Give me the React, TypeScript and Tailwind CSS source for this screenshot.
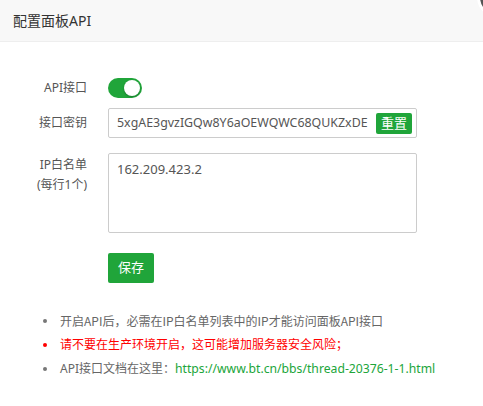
import React from 'react';

const font = { fontFamily: '"Noto Sans", "Noto Sans CJK SC", sans-serif' };
const cjk = { fontFamily: '"Noto Sans CJK SC", sans-serif' };

const FormRow = ({ label, children, align = 'items-center' }: { label: React.ReactNode; children: React.ReactNode; align?: string }) => (
  <div className={`flex ${align}`}>
    <div className="w-[87px] shrink-0 text-right text-[12px] leading-[20px] text-[#555]">{label}</div>
    <div className="ml-[21px]">{children}</div>
  </div>
);

const App = () => {
  return (
    <div className="relative w-full h-[406px] overflow-hidden bg-white" style={font}>
      <div className="h-[42px] bg-[#f8f8f8] border-b border-[#eee] flex items-center pl-[13px] text-[14px] text-[#333]">
        配置面板API
      </div>
      {/* layer close button, mostly off-screen */}
      <div className="absolute left-[477px] top-[-24px] w-[42px] h-[42px] rounded-full bg-[#555] border-[3px] border-white" />

      <div className="pt-[36px]">
        <FormRow label="API接口">
          <div className="w-[34px] h-[20px] rounded-full bg-[#20a53a] flex items-center justify-end pr-[2px]">
            <div className="w-[16px] h-[16px] rounded-full bg-white shadow-[0_1px_2px_rgba(0,0,0,0.25)]" />
          </div>
        </FormRow>

        <div className="mt-[10px]">
          <FormRow label="接口密钥">
            <div className="w-[309px] h-[30px] border border-[#ccc] rounded-[2px] flex items-center justify-between pl-[8px] pr-[4px]">
              <span className="text-[12.4px] text-[#555] whitespace-nowrap overflow-hidden">5xgAE3gvzIGQw8Y6aOEWQWC68QUKZxDE</span>
              <button className="shrink-0 whitespace-nowrap h-[21px] w-[36px] rounded-[2px] bg-[#20a53a] text-white text-[13px] leading-[21px]">重置</button>
            </div>
          </FormRow>
        </div>

        <div className="mt-[15px]">
          <FormRow label={<div className="pt-[2px]">IP白名单<br />(每行1个)</div>} align="items-start">
            <textarea
              className="block w-[309px] h-[80px] border border-[#ccc] rounded-[2px] px-[8px] py-[6px] text-[13px] text-[#555] resize-none outline-none"
              defaultValue="162.209.423.2"
            />
          </FormRow>
        </div>

        <div className="mt-[20px] pl-[108px]">
          <button className="w-[46px] h-[30px] rounded-[2px] bg-[#20a53a] text-white text-[13px]">保存</button>
        </div>

        <ul className="mt-[26px] text-[12px] leading-[24px]">
          <li className="flex items-center text-[#666]">
            <span className="ml-[43px] w-[4px] h-[4px] rounded-full bg-[#777]" />
            <span className="ml-[13px] whitespace-nowrap" style={cjk}>开启API后，必需在IP白名单列表中的IP才能访问面板API接口</span>
          </li>
          <li className="flex items-center text-[#f00]">
            <span className="ml-[43px] w-[4px] h-[4px] rounded-full bg-[#f00]" />
            <span className="ml-[13px] whitespace-nowrap">请不要在生产环境开启，这可能增加服务器安全风险；</span>
          </li>
          <li className="flex items-center text-[#666]">
            <span className="ml-[43px] w-[4px] h-[4px] rounded-full bg-[#777]" />
            <span className="ml-[13px] whitespace-nowrap">
              API接口文档在这里：<a className="text-[#20a53a] text-[12.2px]">https://www.bt.cn/bbs/thread-20376-1-1.html</a>
            </span>
          </li>
        </ul>
      </div>
    </div>
  );
};

export default App;
